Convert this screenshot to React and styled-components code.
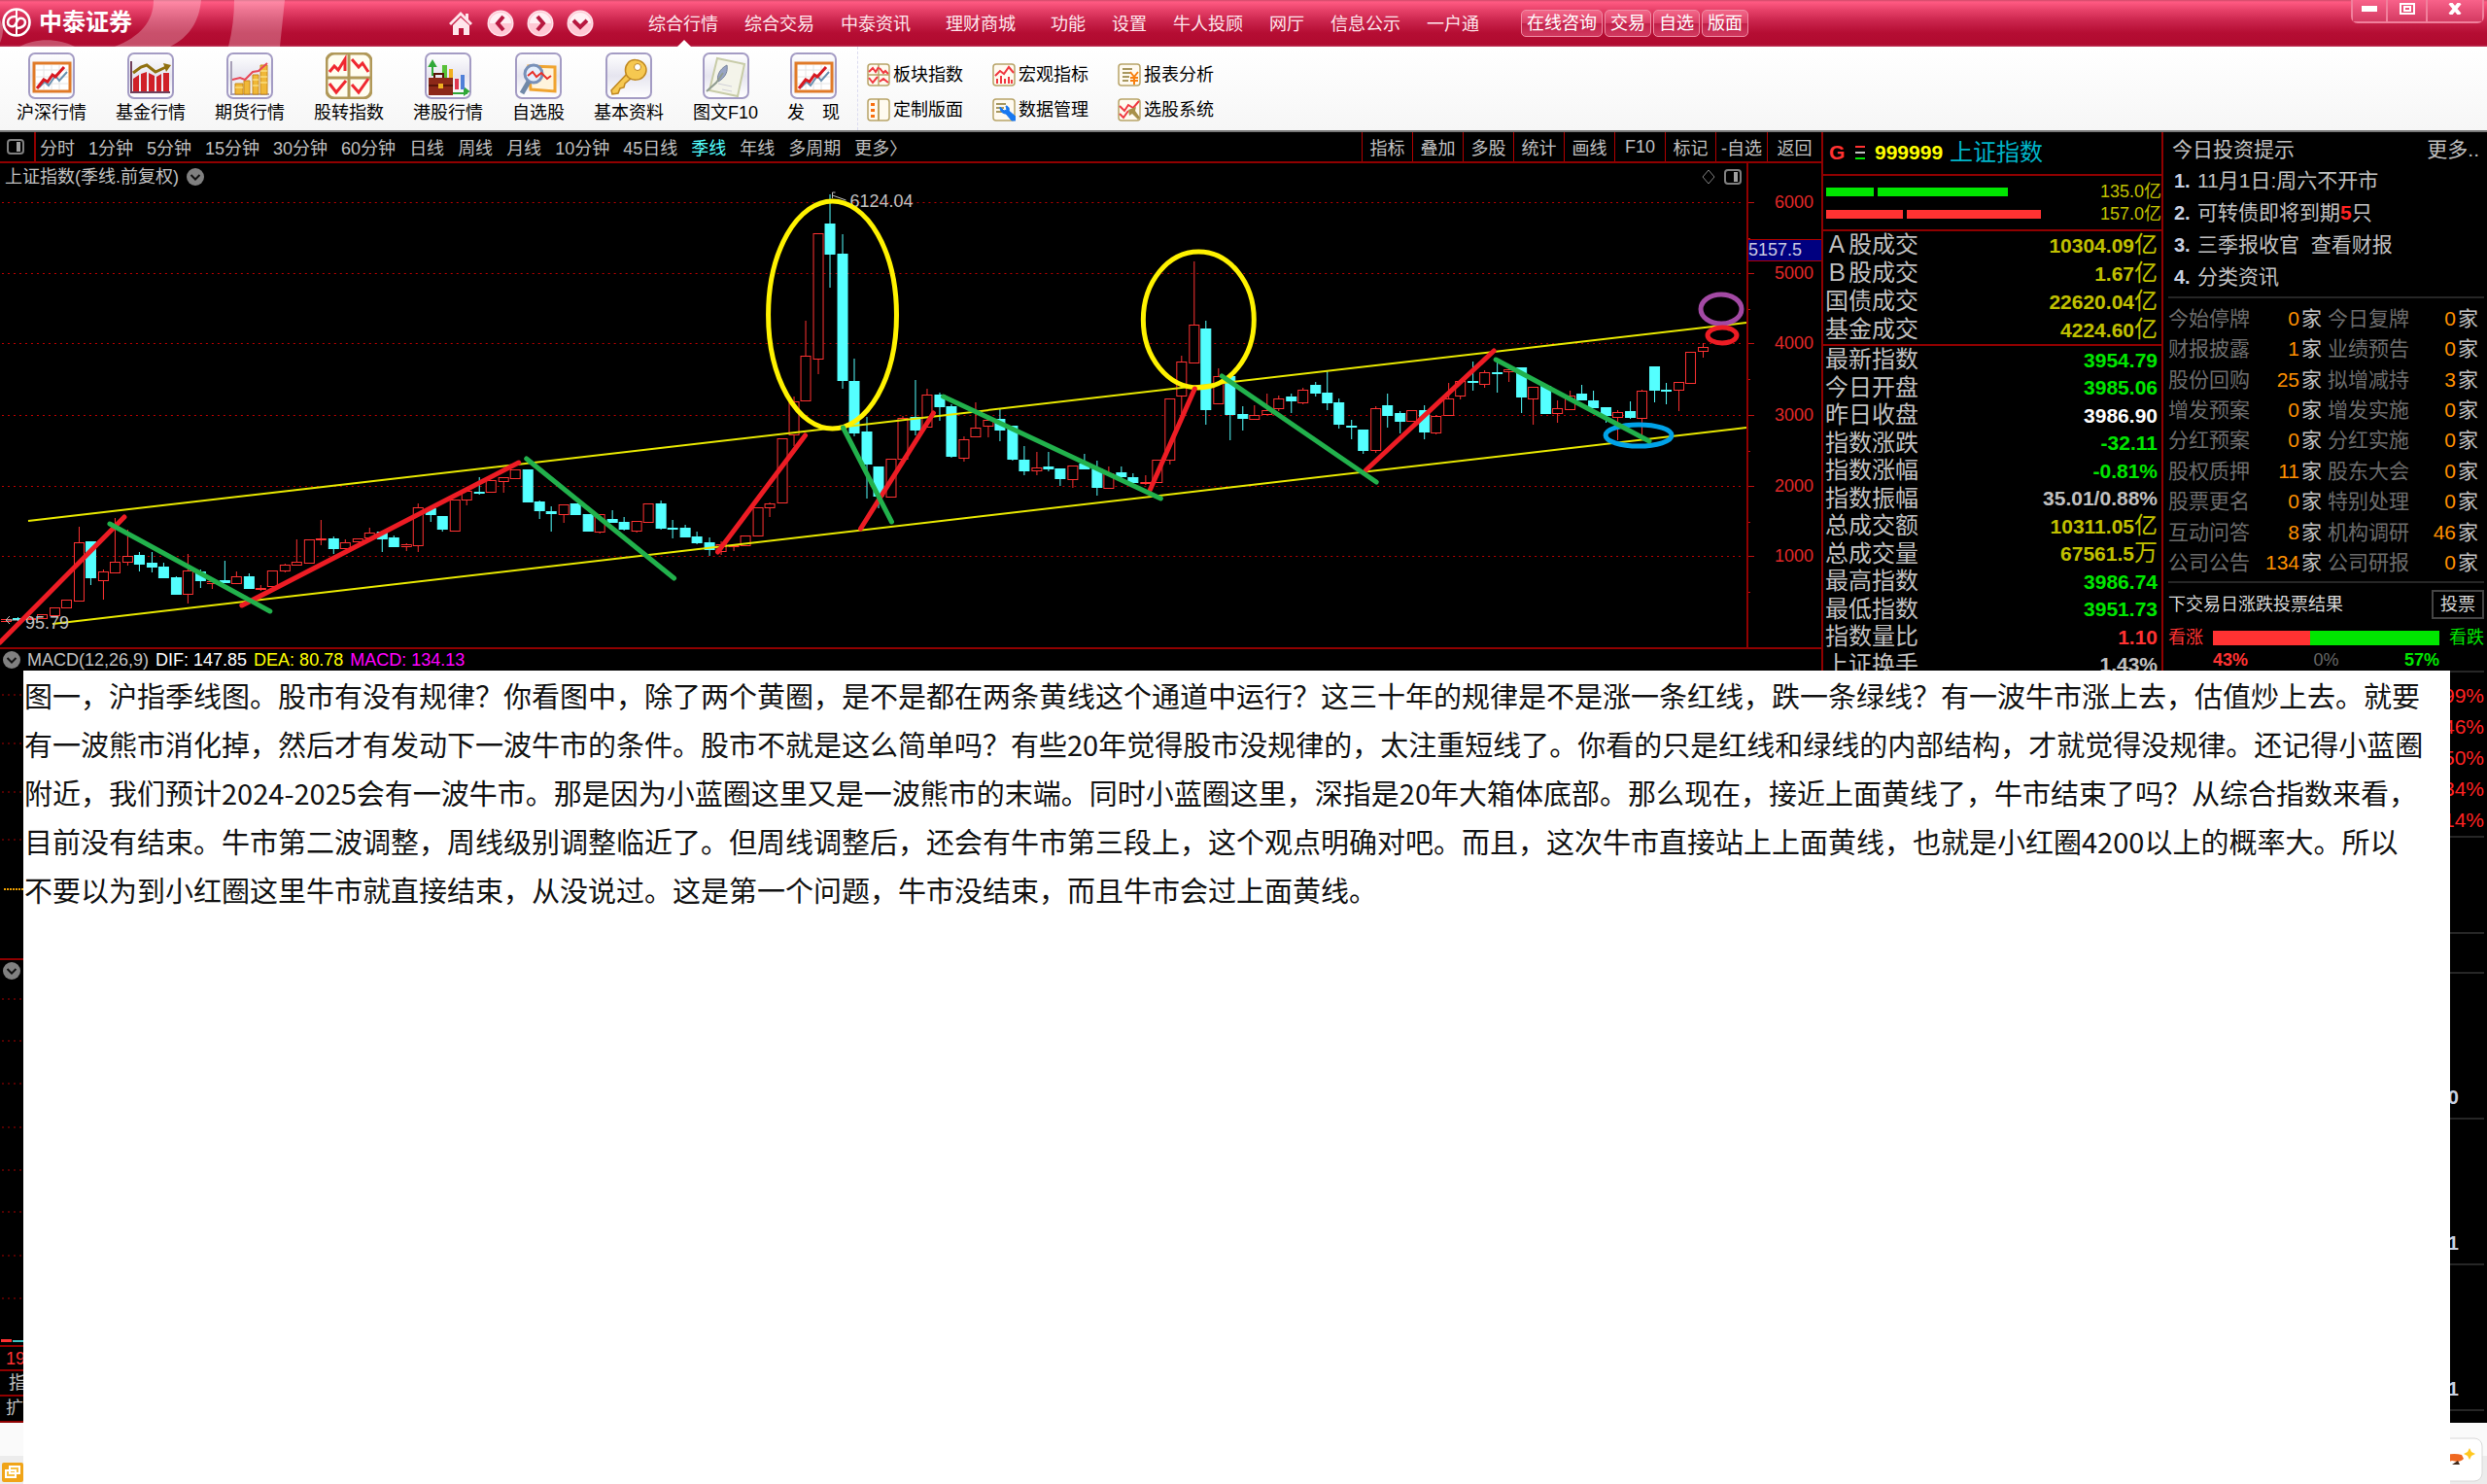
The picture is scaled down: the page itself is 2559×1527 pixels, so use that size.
import React from "react";
import styled, { createGlobalStyle, css } from "styled-components";

const GlobalStyle = createGlobalStyle`
  * {
    box-sizing: border-box;
  }

  body {
    margin: 0;
    background: #000;
    font-family: "Liberation Sans", "Noto Sans CJK SC", sans-serif;
    font-size: 18px;
    line-height: 24px;
    color: #c0c0c0;
  }

  button {
    font-family: inherit;
    cursor: pointer;
  }

  svg {
    display: block;
    flex: none;
  }
`;

const Window = styled.div`
  position: relative;
  display: flex;
  flex-direction: column;
  min-height: 100vh;
  overflow: hidden;
`;

/* ---------- title bar ---------- */

const TitleBar = styled.header`
  position: relative;
  display: flex;
  height: 48px;
  background: linear-gradient(#cf4a69 0, #ff5a82 2px, #e8426a 10px, #c9234b 22px, #b50d33 34px, #b00a2f 46px, #c04060);
`;

const TitleArt = styled.svg`
  position: absolute;
  left: 0;
  top: 0;
`;

const Brand = styled.div`
  position: relative;
  display: flex;
  align-items: center;
  gap: 8px;
  width: 460px;
  padding: 0 0 2px 2px;
  color: #fff;
  font-size: 24px;
  font-weight: bold;
`;

const RoundButtons = styled.div`
  position: relative;
  display: flex;
  align-items: center;
  gap: 13px;
  width: 194px;
`;

const IconButton = styled.button`
  padding: 0;
  border: none;
  background: none;
`;

const Nav = styled.nav`
  position: relative;
  display: flex;
  align-items: center;
`;

const NavLink = styled.a`
  position: relative;
  padding: 13px 14px 11px 13px;
  margin: 0 ${(p) => (p.$wide ? 9 : 0)}px;
  color: #ffe6ec;
  text-decoration: none;

  ${(p) =>
    p.$active &&
    css`
      &::after {
        content: "";
        position: absolute;
        left: 50%;
        bottom: 0;
        margin-left: -7px;
        border: 7px solid transparent;
        border-top: none;
        border-bottom-color: #fff;
      }
    `}
`;

const QuickButtons = styled.div`
  display: flex;
  align-items: center;
  gap: 2px;
  padding-left: 29px;
`;

const QuickButton = styled.button`
  height: 28px;
  padding: 0 5px;
  border: 1px solid #f08ca4;
  border-radius: 5px;
  background: linear-gradient(#f4688a, #d83a62 50%, #c01f48 50%, #d23a60);
  color: #fff;
  font-size: 18px;
  line-height: 24px;
`;

const WindowControls = styled.div`
  display: flex;
  height: 24px;
  margin: 0 3px 0 auto;
  border: 2px solid #f0809c;
  border-top: none;
  border-radius: 0 0 7px 7px;
`;

const ControlButton = styled.button`
  display: flex;
  align-items: center;
  justify-content: center;
  width: ${(p) => p.$width}px;
  padding: 0 0 4px;
  border: none;
  border-right: ${(p) => (p.$last ? "none" : "2px solid #f0809c")};
  background: linear-gradient(#f8628a, #d43a62);
`;

/* ---------- icon tool bar ---------- */

const ToolBar = styled.div`
  display: flex;
  height: 88px;
  border-bottom: 2px solid #777;
  background: linear-gradient(#fff, #fafafa 60%, #f6f6f6);
  color: #000;
`;

const BigTools = styled.div`
  display: flex;
  align-items: flex-start;
  gap: 30px;
  padding: 6px 18px 0 17px;
  border-right: 1px dashed #dcdcf0;
`;

const BigTool = styled.button`
  display: flex;
  flex-direction: column;
  align-items: center;
  padding: 0;
  border: none;
  background: none;
  color: #000;
  font-size: 18px;
  line-height: 28px;
  white-space: pre;
`;

const SmallTools = styled.div`
  display: grid;
  grid-template-columns: repeat(3, 100px);
  grid-template-rows: 24px 24px;
  gap: 12px 29px;
  padding: 17px 0 0 9px;
`;

const SmallTool = styled.button`
  display: flex;
  align-items: center;
  gap: 3px;
  padding: 0;
  border: none;
  background: none;
  color: #000;
  font-size: 18px;
  line-height: 24px;
`;

/* ---------- workspace ---------- */

const Workspace = styled.main`
  display: flex;
  flex: 1;
  background: #000;
`;

const ChartColumn = styled.section`
  display: flex;
  flex: 1;
  flex-direction: column;
  min-width: 0;
  border-right: 2px solid #900000;
`;

const PeriodBar = styled.div`
  display: flex;
  height: 32px;
  border-bottom: 2px solid #900000;
`;

const PanelToggle = styled.button`
  width: 37px;
  padding: 0 0 0 7px;
  border: none;
  border-right: 2px solid #900000;
  background: none;
`;

const Periods = styled.div`
  display: flex;
  flex: 1;
  align-items: center;
  gap: 14px;
  padding-left: 4px;
`;

const Period = styled.button`
  padding: 0;
  border: none;
  background: none;
  color: ${(p) => (p.$active ? "#54ffff" : "#c0c0c0")};
  font-size: 18px;
  white-space: nowrap;
`;

const ChartTool = styled.button`
  width: ${(p) => p.$width || 52}px;
  padding: 0;
  border: none;
  border-left: 1px solid #b00000;
  background: none;
  color: #c0c0c0;
  font-size: 18px;
`;

const ChartRow = styled.div`
  display: flex;
  border-bottom: 2px solid #900000;
`;

const ChartArea = styled.div`
  flex: 1;
  min-width: 0;
`;

const ChartTitle = styled.div`
  display: flex;
  align-items: center;
  gap: 8px;
  height: 28px;
  padding: 0 5px;

  span {
    flex: 1;
  }
`;

const ChartName = styled.h1`
  margin: 0;
  font-size: 18px;
  font-weight: normal;
`;

const Axis = styled.svg`
  border-left: 2px solid #900000;
`;

const IndicatorTitle = styled.div`
  display: flex;
  align-items: center;
  gap: 7px;
  height: 24px;
  padding: 0 0 2px 3px;
  white-space: pre;
`;

const Indicator = styled.span`
  color: ${(p) => p.$color};
`;

const SubPanel = styled.div`
  height: ${(p) => p.$height}px;
  border-bottom: 2px solid #900000;
`;

const StripRow = styled.div`
  height: ${(p) => p.$height}px;
  padding-left: ${(p) => p.$pad}px;
  border-bottom: 2px solid #900000;
  color: ${(p) => p.$color || "#c0c0c0"};
`;

/* ---------- quote panel ---------- */

const QuotePanel = styled.section`
  width: 350px;
  border-right: 2px solid #900000;
`;

const QuoteHead = styled.div`
  display: flex;
  align-items: center;
  height: 45px;
  padding: 0 0 1px 6px;
  border-bottom: 2px solid #900000;
  font-size: 21px;
  font-weight: bold;
`;

const Flag = styled.span`
  width: 26px;
  color: #ff3232;
`;

const Code = styled.span`
  padding: 0 7px 0 9px;
  color: #ff0;
`;

const IndexName = styled.span`
  color: #00b4c8;
  font-size: 24px;
  font-weight: normal;
`;

const FlowBox = styled.div`
  display: flex;
  flex-direction: column;
  justify-content: center;
  height: 57px;
  padding-left: 3px;
  border-bottom: 2px solid #900000;
  color: #c0c000;
`;

const FlowRow = styled.div`
  display: flex;
  align-items: center;
  gap: 4px;
  height: 23px;
`;

const FlowBar = styled.span`
  width: ${(p) => p.$width}px;
  height: 9px;
  background: ${(p) => p.$color};
`;

const FlowValue = styled.span`
  margin-left: auto;
`;

const QuoteTable = styled.table`
  width: 100%;
  height: ${(p) => p.$height}px;
  border-collapse: collapse;
  border-bottom: 2px solid #900000;
  font-size: 24px;
  line-height: 24px;

  th {
    padding: 0 0 0 2px;
    font-weight: normal;
    text-align: left;
  }

  td {
    padding: 0 4px 0 0;
    text-align: right;
  }
`;

const Value = styled.td`
  color: ${(p) => p.$color};

  b {
    font-size: 21px;
  }
`;

/* ---------- news panel ---------- */

const NewsPanel = styled.aside`
  width: 333px;
  padding: 0 3px 0 5px;
  font-size: 21px;
`;

const NewsHead = styled.div`
  display: flex;
  justify-content: space-between;
  padding: 6px 5px 3px 4px;

  a {
    color: inherit;
    text-decoration: none;
  }
`;

const NewsList = styled.ol`
  height: 138px;
  margin: 0;
  padding: 0 0 0 6px;
  border-bottom: 2px solid #262626;
  list-style: none;

  li {
    display: flex;
    height: 33px;
    align-items: center;
    white-space: pre;
  }

  b {
    width: 24px;
    color: #c8d0e0;
    font-size: 20px;
  }

  em {
    color: #f22;
    font-style: normal;
    font-weight: bold;
  }
`;

const EventTable = styled.table`
  width: 100%;
  height: 293px;
  padding: 5px 0 3px;
  border-bottom: 2px solid #262626;
  border-spacing: 0;
  line-height: 24px;
  table-layout: fixed;

  th {
    width: 84px;
    padding: 0;
    color: #6c6c6c;
    font-weight: normal;
    text-align: left;
  }

  td {
    padding: 0 6px 0 0;
    text-align: right;
  }

  td:nth-child(2) {
    width: 80px;
  }

  b {
    padding-right: 2px;
    color: #ff9000;
    font-weight: normal;
  }
`;

const VoteHead = styled.div`
  display: flex;
  align-items: center;
  justify-content: space-between;
  height: 44px;
  font-size: 18px;
  color: #d8d8d8;
`;

const VoteButton = styled.button`
  height: 30px;
  padding: 0 7px;
  border: 2px solid #444;
  background: #000;
  color: #d8d8d8;
  font-size: 18px;
  line-height: 24px;
`;

const VoteRow = styled.div`
  display: grid;
  grid-template-columns: 36px 1fr 36px;
  column-gap: 10px;
  align-items: center;
  height: 23px;
  font-size: 18px;
`;

const Side = styled.span`
  color: ${(p) => p.$color};
`;

const VoteBar = styled.div`
  display: flex;
  height: 15px;
  background: #00e600;

  i {
    background: #ff3232;
  }
`;

const VoteShares = styled.div`
  display: flex;
  grid-column: 2;
  justify-content: space-between;
  font-weight: bold;

  span:nth-child(2) {
    color: #666;
    font-weight: normal;
  }
`;

const RankList = styled.ul`
  height: ${(p) => p.$height}px;
  margin: 0;
  padding: 8px 0 0;
  border-top: 2px solid #262626;
  list-style: none;
  color: #f22;
  text-align: right;

  li {
    padding: 4px 0;
  }
`;

const Gap = styled.div`
  height: ${(p) => p.$height}px;
  border-top: 2px solid #262626;
`;

const Stat = styled.div`
  display: flex;
  align-items: flex-end;
  justify-content: flex-end;
  height: 150px;
  padding: 0 26px 9px 0;
  border-top: 2px solid #262626;
  color: #c8d0e0;
  font-size: 20px;
  font-weight: bold;
`;

const StatusBar = styled.footer`
  display: flex;
  align-items: flex-end;
  justify-content: space-between;
  height: 64px;
  padding: 0 4px 3px 2px;
  background: linear-gradient(#fafafa 34px, #ececec 34px);
`;

/* ---------- note lying over the lower half ---------- */

const Note = styled.article`
  position: absolute;
  top: 690px;
  right: 38px;
  bottom: 0;
  left: 24px;
  overflow: hidden;
  background: #fff;
  color: #111;
  font-family: "Noto Sans CJK SC", sans-serif;
  font-size: 29px;
  line-height: 50px;
  white-space: nowrap;

  p {
    margin: 0;
    padding-left: 1px;
  }
`;

const RED = "#ff3232";
const CYAN = "#54ffff";
const GREEN = "#00e600";
const YELLOW = "#c0c000";

/* Candles: [up, high, top of body, bottom of body, low],
   in thirds of a pixel below the base of their run. */
const RUNS = [
  {
    base: 400,
    candles: [
      [1, 711, 712, 716, 717], [0, 706, 709, 712, 716], [1, 706, 707, 710, 711], [1, 697, 697, 707, 707],
      [1, 674, 674, 699, 699], [1, 652, 652, 676, 676], [1, 425, 475, 653, 653], [0, 470, 470, 582, 605],
      [1, 557, 565, 590, 650], [1, 400, 535, 568, 568], [1, 436, 517, 535, 545], [0, 505, 514, 541, 564],
      [0, 505, 538, 550, 568], [0, 537, 550, 583, 583], [0, 578, 583, 632, 632], [1, 511, 562, 634, 662],
      [0, 558, 565, 590, 614], [1, 590, 593, 599, 617], [0, 532, 592, 596, 601], [1, 564, 580, 599, 599],
      [0, 570, 578, 614, 614], [1, 605, 614, 618, 623], [1, 562, 562, 610, 610], [1, 541, 544, 562, 566],
      [1, 466, 535, 543, 543], [1, 466, 466, 536, 541], [1, 406, 461, 464, 483], [0, 457, 461, 493, 510],
      [1, 466, 475, 493, 493], [1, 463, 463, 472, 472], [1, 430, 445, 458, 458], [0, 437, 441, 461, 505],
      [0, 453, 460, 486, 486], [1, 478, 481, 486, 500], [1, 353, 367, 483, 503], [0, 364, 369, 388, 411],
      [0, 394, 394, 433, 442], [1, 341, 341, 437, 437], [1, 314, 314, 343, 361], [0, 272, 317, 321, 326],
      [1, 283, 283, 319, 319], [1, 272, 274, 284, 320], [1, 250, 250, 275, 280], [0, 250, 250, 348, 352],
      [0, 344, 348, 375, 402], [0, 363, 377, 384, 442], [1, 358, 358, 388, 415], [0, 353, 353, 388, 388],
      [0, 388, 388, 438, 438], [1, 388, 388, 442, 446], [0, 375, 403, 410, 410], [0, 397, 411, 433, 438],
      [1, 409, 409, 438, 445], [1, 355, 355, 410, 410], [0, 344, 353, 430, 434], [0, 406, 430, 433, 461],
    ],
  },
  {
    base: 180,
    candles: [
      [0, 1080, 1090, 1115, 1115], [0, 1102, 1117, 1133, 1139], [0, 1120, 1135, 1155, 1175], [1, 1130, 1140, 1160, 1172],
      [1, 1140, 1143, 1147, 1160], [1, 1114, 1114, 1142, 1142], [1, 1027, 1027, 1114, 1114], [1, 1010, 1015, 1027, 1057],
      [1, 812, 812, 1011, 1011], [1, 685, 700, 800, 838], [1, 450, 559, 695, 695], [1, 181, 181, 566, 616],
      [0, 60, 149, 243, 347], [0, 184, 244, 634, 661], [0, 568, 635, 796, 806], [0, 748, 793, 890, 1000],
      [0, 901, 901, 990, 1030], [1, 875, 875, 993, 993], [1, 743, 749, 875, 875], [0, 634, 748, 787, 805],
      [1, 661, 677, 777, 777], [0, 671, 677, 715, 760], [0, 707, 713, 868, 873], [1, 807, 817, 872, 886],
      [1, 702, 781, 808, 808], [1, 755, 755, 775, 810], [0, 722, 753, 787, 823], [0, 775, 775, 877, 882],
      [0, 838, 878, 913, 926], [1, 855, 902, 911, 927], [0, 856, 901, 907, 914], [0, 907, 907, 935, 960],
      [1, 898, 898, 940, 967], [0, 860, 890, 905, 905], [0, 882, 905, 962, 991], [1, 900, 920, 967, 967],
      [0, 900, 918, 930, 938], [0, 920, 933, 948, 948], [1, 927, 947, 952, 958], [1, 880, 880, 948, 948],
      [1, 691, 691, 880, 895], [1, 559, 577, 682, 740], [1, 266, 461, 578, 578], [0, 450, 473, 724, 770],
      [1, 596, 622, 704, 704], [0, 622, 622, 738, 820], [0, 715, 738, 750, 788], [1, 712, 740, 754, 754],
    ],
  },
  {
    base: 250,
    candles: [
      [1, 466, 515, 527, 527], [1, 471, 481, 509, 520], [0, 465, 475, 487, 524], [1, 448, 454, 491, 497],
      [0, 430, 439, 461, 473], [0, 395, 461, 492, 515], [0, 479, 493, 559, 573], [0, 546, 565, 568, 605],
      [0, 577, 577, 640, 650], [1, 505, 511, 640, 648], [0, 466, 502, 532, 570], [0, 520, 525, 550, 587],
      [1, 517, 517, 548, 548], [0, 502, 515, 582, 605], [1, 530, 535, 584, 591], [1, 433, 481, 530, 530],
      [1, 425, 425, 472, 482], [0, 366, 426, 429, 456], [1, 394, 400, 434, 446], [0, 370, 399, 402, 461],
      [1, 388, 391, 396, 430], [0, 385, 385, 474, 524], [1, 445, 445, 481, 560], [0, 440, 440, 524, 524],
      [1, 485, 511, 526, 555], [1, 457, 470, 513, 513], [0, 437, 466, 482, 482], [0, 456, 485, 506, 506],
      [0, 507, 507, 530, 555], [1, 515, 521, 536, 608], [0, 488, 520, 537, 542], [1, 452, 457, 539, 605],
      [0, 380, 380, 452, 492], [0, 433, 452, 455, 497], [1, 430, 430, 454, 520], [1, 337, 337, 433, 433],
      [1, 308, 320, 332, 353],
    ],
  },
];

const CANDLES = RUNS.flatMap(({ base, candles }) =>
  candles.map(([up, ...ys]) => [up, ...ys.map((y) => Math.round(base + y / 3))])
);

const GRID = [
  [6000, 208],
  [5000, 281],
  [4000, 353],
  [3000, 427],
  [2000, 500],
  [1000, 572],
];

const RALLIES = [
  [0, 661, 128, 532], [249, 623, 534, 476], [739, 568, 829, 448],
  [886, 544, 961, 425], [1184, 504, 1230, 400], [1406, 484, 1538, 361],
];

const DECLINES = [
  [113, 539, 278, 629], [542, 472, 694, 595], [868, 440, 918, 537],
  [971, 408, 1195, 513], [1258, 387, 1417, 496], [1540, 370, 1698, 454],
];

const CIRCLES = [
  ["#fff200", 857, 324, 66, 117],
  ["#fff200", 1234, 329, 57, 70],
  ["#a349a4", 1772, 318, 21, 15],
  ["#ed1c24", 1773, 345, 15, 8],
  ["#00a2e8", 1687, 448, 34, 11],
];

const Candle = ({ index, data: [up, high, top, bottom, low] }) => {
  const x = Math.round(6 + index * 12.477);
  const height = Math.max(bottom - top, 1);
  const color = up ? RED : CYAN;
  return (
    <g stroke={color} fill={up ? "#000" : color}>
      {high < top && <path d={`M${x + 0.5} ${high}V${top}`} />}
      {low > bottom && <path d={`M${x + 0.5} ${bottom}V${low}`} />}
      <rect x={x - 4.5} y={top + 0.5} width="10" height={height} />
    </g>
  );
};

const Strokes = ({ color, lines }) => (
  <g stroke={color} strokeWidth="5" strokeLinecap="round">
    {lines.map(([x1, y1, x2, y2]) => (
      <line key={x1} x1={x1} y1={y1} x2={x2} y2={y2} />
    ))}
  </g>
);

const PriceChart = () => (
  <svg width="100%" height="470" viewBox="0 196 1798 470" preserveAspectRatio="none">
    {GRID.map(([price, y]) => (
      <path key={price} d={`M2 ${y + 0.5}H1794`} stroke="#c00000" strokeWidth="1" strokeDasharray="2 4" />
    ))}
    {CANDLES.map((data, i) => (
      <Candle key={i} index={i} data={data} />
    ))}
    <g fill="none" stroke="#e8e800">
      <path d="M29 536L1798 332" strokeWidth="2" />
      <path d="M54 642L1798 440" strokeWidth="2" />
    </g>
    <g fill="none" stroke="#c0c0c0">
      <path d="M857 198h3M857 198v6M857 201l14 5" />
      <path d="M6 638h12M6 638l4-4M6 638l4 4" />
    </g>
    <g fill="#c0c0c0" fontSize="18">
      <text x="875" y="213">6124.04</text>
      <text x="26" y="647">95.79</text>
    </g>
    <g fill="none" strokeWidth="5">
      {CIRCLES.map(([color, cx, cy, rx, ry]) => (
        <ellipse key={cx + cy} cx={cx} cy={cy} rx={rx} ry={ry} stroke={color} />
      ))}
    </g>
    <Strokes color="#ed1c24" lines={RALLIES} />
    <Strokes color="#22b14c" lines={DECLINES} />
  </svg>
);

const PriceAxis = () => (
  <Axis width="77" height="498" viewBox="2 168 75 498" preserveAspectRatio="none">
    <rect x="1" y="246" width="76" height="22" fill="#000080" />
    <path d="M0 246.5H77M0 268.5H77" stroke="#b00000" />
    <text x="2" y="263" fontSize="18" fill="#c8c8e0">5157.5</text>
    {GRID.map(([price, y]) => (
      <g key={price}>
        <path d={`M0 ${y + 0.5}H8M0 ${y + 37.5}H4`} stroke="#c01010" />
        <text x="69" y={y + 6} fontSize="18" fill="#e02828" textAnchor="end">{price}</text>
      </g>
    ))}
  </Axis>
);

const DottedLines = ({ height, lines }) => (
  <svg width="100%" height={height}>
    {lines.map((y) => (
      <line key={y} x1="2" x2="100%" y1={y} y2={y} stroke="#a80000" strokeDasharray="2 4" />
    ))}
  </svg>
);

/* ---------- icons ---------- */

const Emblem = () => (
  <svg width="30" height="32" viewBox="0 0 30 32" fill="none" stroke="#fff" strokeWidth="2.6">
    <circle cx="15" cy="16" r="13.5" />
    <path d="M15 3v26" strokeWidth="2" />
    <path d="M14 10c-6 0-8 3-8 6s3 5 6 4 3-7 6-8 6 1 6 4-3 6-9 6" />
  </svg>
);

const HomeIcon = () => (
  <svg width="28" height="28" viewBox="0 0 28 28" fill="#ffe6ec">
    <path d="M14 2L2 14l2 2L14 6l10 10 2-2-4-4V4h-3v3z" />
    <path d="M14 8l-8 8v10h6v-7h5v7h6V16z" />
  </svg>
);

const RoundIcon = ({ d }) => (
  <svg width="28" height="28" viewBox="0 0 28 28">
    <circle cx="14" cy="14" r="13.5" fill="#ffe0e8" />
    <circle cx="14" cy="14" r="12" fill="#ffc8d4" />
    <path d="M3 14a11 11 0 0 1 22 0z" fill="#fff0f4" />
    <path d={d} fill="none" stroke="#b81840" strokeWidth="4" />
  </svg>
);

const ChevronIcon = () => (
  <svg width="18" height="18" viewBox="0 0 18 18">
    <circle cx="9" cy="9" r="9" fill="#808080" />
    <path d="M4.500 7L9 11.500L13.500 7" fill="none" stroke="#111" strokeWidth="2" />
  </svg>
);

const DockIcon = () => (
  <svg width="18" height="16" viewBox="0 0 18 16" fill="none" stroke="#808080" strokeWidth="2">
    <rect x="1" y="1" width="16" height="14" rx="3" />
    <rect x="10" y="3" width="4" height="10" fill="#a0a0a0" stroke="none" />
  </svg>
);

const Framed = ({ children }) => (
  <svg width="48" height="48" viewBox="0 0 48 48" fill="none">
    <defs>
      <linearGradient id="frame" x2="0" y2="1">
        <stop offset="0" stopColor="#fff" />
        <stop offset="0.5" stopColor="#e6e5ef" />
        <stop offset="1" stopColor="#fff" />
      </linearGradient>
    </defs>
    <rect x="1" y="1" width="46" height="46" rx="6" fill="url(#frame)" stroke="#a49cc4" strokeWidth="2" />
    {children}
  </svg>
);

const BoardIcon = () => (
  <Framed>
    <rect x="6" y="11" width="37" height="29" fill="#fff" stroke="#e07a28" strokeWidth="3" />
    <path d="M8 18h33M8 25h33M8 32h33M16 13v25M24 13v25M32 13v25" stroke="#e4e4e4" />
    <path d="M11 36l6-6 4 4 7-10 4 5 8-9" stroke="#6890b0" strokeWidth="2" />
    <path d="M9 37l7-9 4 2 5-7 3 2 9-10" stroke="#d81820" strokeWidth="3" />
  </Framed>
);

const FundIcon = () => (
  <Framed>
    <path d="M4 9v32h40" stroke="#70405c" strokeWidth="2" />
    <path d="M6 40V27l6-4v17zM14 40V22l6-2v20zM22 40V21l6 3v16zM30 40V25l5-3v18zM37 40V21h6v19z" fill="#d02028" />
    <path d="M6 21l8-6 6-2 9 7 13-6" stroke="#907010" strokeWidth="3" />
    <path d="M37 11l8 2-5 7z" fill="#907010" />
  </Framed>
);

const FutureIcon = () => (
  <Framed>
    <path d="M5 9v34h39" stroke="#a8a0b8" strokeWidth="2" />
    <path d="M9 43V32h8v11zM18 43V29h6v14zM27 43V23h6v20zM35 43V13h7v30z" fill="#f0b838" stroke="#c88818" />
    <path d="M9 36h8M27 28h6M27 34h6M35 19h7M35 25h7M35 31h7" stroke="#fff0a0" />
    <path d="M6 28l8-2 5 2 8-8 6-1 9-8" stroke="#e84858" strokeWidth="2" />
  </Framed>
);

const QuadIcon = () => (
  <svg width="48" height="48" viewBox="0 0 48 48" fill="none">
    <rect x="1" y="1" width="46" height="46" rx="8" fill="#fffdf0" stroke="#b09858" strokeWidth="3" />
    <path d="M24 2v44M2 26h44" stroke="#b09858" strokeWidth="3" />
    <path d="M4 20l5-6 4 4 7-11v12M27 7l7 8 4-4 6 9M4 32l7 9 10-12M27 33l7 8 10-14" stroke="#f02830" strokeWidth="3" />
  </svg>
);

const HongKongIcon = () => (
  <Framed>
    <path d="M8 24V11M8 9l-3 5h6zM24 42h20M45 40l-4-3v6z" stroke="#30a838" strokeWidth="2" fill="#30a838" />
    <path d="M18 26V13h5v13z" fill="#58c038" />
    <path d="M25 30V17h4v13z" fill="#f0b020" />
    <path d="M31 38V27h4v11z" fill="#e03850" />
    <path d="M37 38V23h4v15z" fill="#5080d8" />
    <rect x="4" y="26" width="25" height="18" fill="#8c2818" />
    <path d="M10 26v-4h9v4M4 34h25" stroke="#581408" strokeWidth="2" />
    <rect x="14" y="32" width="5" height="5" fill="#f0b020" />
  </Framed>
);

const WatchIcon = () => (
  <Framed>
    <path d="M14 14l27 1v25l-25-2z" fill="#fff4dc" stroke="#f0a430" strokeWidth="3" />
    <circle cx="19" cy="22" r="9" fill="#e4eefc" stroke="#7890b8" strokeWidth="3" />
    <path d="M13 24l5-4 4 5 5-4 6 6 4-3" stroke="#e83028" strokeWidth="2" />
    <path d="M14 30L7 42" stroke="#7088a8" strokeWidth="5" />
  </Framed>
);

const KeyIcon = () => (
  <Framed>
    <g stroke="#c08820" strokeWidth="1.500" fill="#f6c850">
      <path d="M22 22L6 39l1 4 6-1 2-5 4-1 1-4 7-6z" />
      <path d="M23 11c4-5 12-4 16 0s4 10 0 14-11 4-15 1-5-10-1-15z" />
    </g>
    <circle cx="33" cy="15" r="3.500" fill="#fff" stroke="#c08820" />
  </Framed>
);

const QuillIcon = () => (
  <Framed>
    <path d="M15 6l28 6-7 33-29-6z" fill="#f4f4ea" stroke="#c8cca8" strokeWidth="2" />
    <path d="M16 32l14 3M20 38l10 2" stroke="#d0d0d8" />
    <path d="M25 13c-8 4-11 12-9 17l3-2c5-4 7-9 6-15z" fill="#98a4c4" stroke="#78849c" />
    <path d="M4 40l10-9 7-10" stroke="#909c90" strokeWidth="2" />
  </Framed>
);

const SmallIcon = ({ children }) => (
  <svg width="24" height="24" viewBox="0 0 24 24" fill="none">
    <rect x="1" y="1" width="22" height="22" rx="3" fill="#fffaf0" stroke="#b8a468" strokeWidth="1.500" />
    {children}
  </svg>
);

const SMALL_ICONS = {
  quad: (
    <SmallIcon>
      <path d="M12 1v22M1 12h22" stroke="#b8a468" strokeWidth="1.500" />
      <path d="M2 9l4-4 3 4 3-5M13 5l4 5 2-2 3 3M2 15l4 5 5-6M13 19l4-3 5 4" stroke="#f03840" strokeWidth="2" />
    </SmallIcon>
  ),
  macro: (
    <SmallIcon>
      <path d="M3 13l5-5 4 3 5-7 5 6" stroke="#f03840" strokeWidth="2" />
      <path d="M5 21v-5M9 21v-8M13 21v-5M17 21v-7M20 21v-4" stroke="#f03840" strokeWidth="2" />
    </SmallIcon>
  ),
  report: (
    <SmallIcon>
      <path d="M5 6h10M5 10h8M5 14h7M5 18h6" stroke="#a89860" strokeWidth="2" />
      <path d="M13 9l4 5 4-5M17 14v8M13 15h8M13 18h8" stroke="#f88010" strokeWidth="2" />
    </SmallIcon>
  ),
  layout: (
    <SmallIcon>
      <path d="M12 1v22" stroke="#b8a468" strokeWidth="2" />
      <path d="M6 5v3M6 11v3M6 17v3" stroke="#f87010" strokeWidth="4" />
    </SmallIcon>
  ),
  data: (
    <SmallIcon>
      <path d="M4 6h10M4 10h8M4 14h6" stroke="#a89860" strokeWidth="2" />
      <path d="M8 9c0 5 3 7 6 7l6 7h4v-4l-7-6c1-3-1-5-3-5l1 4-3 1z" fill="#1878f0" stroke="#1878f0" />
    </SmallIcon>
  ),
  pick: (
    <SmallIcon>
      <path d="M2 8l5 5 4-6 5 3 6-7M2 16l4 4 5-7" stroke="#f03840" strokeWidth="2" />
      <path d="M11 12l8-3-1 4 5 7-2 2-6-6-3 2z" fill="#a89048" />
    </SmallIcon>
  ),
};

const NAV = ["综合行情", "综合交易", "中泰资讯", "理财商城", "功能", "设置", "牛人投顾", "网厅", "信息公示", "一户通"];

const BIG_TOOLS = [
  ["沪深行情", BoardIcon],
  ["基金行情", FundIcon],
  ["期货行情", FutureIcon],
  ["股转指数", QuadIcon],
  ["港股行情", HongKongIcon],
  ["自选股", WatchIcon],
  ["基本资料", KeyIcon],
  ["图文F10", QuillIcon],
  ["发　现", BoardIcon],
];

const SMALL_TOOLS = [
  ["板块指数", "quad"],
  ["宏观指标", "macro"],
  ["报表分析", "report"],
  ["定制版面", "layout"],
  ["数据管理", "data"],
  ["选股系统", "pick"],
];

const PERIODS = [
  "分时", "1分钟", "5分钟", "15分钟", "30分钟", "60分钟", "日线", "周线",
  "月线", "10分钟", "45日线", "季线", "年线", "多周期", "更多",
];

const TURNOVER = [
  ["Ａ股成交", "10304.09", "亿", YELLOW],
  ["Ｂ股成交", "1.67", "亿", YELLOW],
  ["国债成交", "22620.04", "亿", YELLOW],
  ["基金成交", "4224.60", "亿", YELLOW],
];

const QUOTES = [
  ["最新指数", "3954.79", "", GREEN],
  ["今日开盘", "3985.06", "", GREEN],
  ["昨日收盘", "3986.90", "", "#fff"],
  ["指数涨跌", "-32.11", "", GREEN],
  ["指数涨幅", "-0.81%", "", GREEN],
  ["指数振幅", "35.01/0.88%", "", "#c0c0c0"],
  ["总成交额", "10311.05", "亿", YELLOW],
  ["总成交量", "67561.5", "万", YELLOW],
  ["最高指数", "3986.74", "", GREEN],
  ["最低指数", "3951.73", "", GREEN],
  ["指数量比", "1.10", "", RED],
  ["上证换手", "1.43%", "", "#c0c0c0"],
];

const EVENTS = [
  ["今始停牌", 0, "今日复牌", 0],
  ["财报披露", 1, "业绩预告", 0],
  ["股份回购", 25, "拟增减持", 3],
  ["增发预案", 0, "增发实施", 0],
  ["分红预案", 0, "分红实施", 0],
  ["股权质押", 11, "股东大会", 0],
  ["股票更名", 0, "特别处理", 0],
  ["互动问答", 8, "机构调研", 46],
  ["公司公告", 134, "公司研报", 0],
];

const NOTE = [
  "图一，沪指季线图。股市有没有规律？你看图中，除了两个黄圈，是不是都在两条黄线这个通道中运行？这三十年的规律是不是涨一条红线，跌一条绿线？有一波牛市涨上去，估值炒上去。就要",
  "有一波熊市消化掉，然后才有发动下一波牛市的条件。股市不就是这么简单吗？有些20年觉得股市没规律的，太注重短线了。你看的只是红线和绿线的内部结构，才就觉得没规律。还记得小蓝圈",
  "附近，我们预计2024-2025会有一波牛市。那是因为小蓝圈这里又是一波熊市的末端。同时小蓝圈这里，深指是20年大箱体底部。那么现在，接近上面黄线了，牛市结束了吗？从综合指数来看，",
  "目前没有结束。牛市第二波调整，周线级别调整临近了。但周线调整后，还会有牛市第三段上，这个观点明确对吧。而且，这次牛市直接站上上面黄线，也就是小红圈4200以上的概率大。所以",
  "不要以为到小红圈这里牛市就直接结束，从没说过。这是第一个问题，牛市没结束，而且牛市会过上面黄线。",
];

const Quotes = ({ rows, height }) => (
  <QuoteTable $height={height}>
    <tbody>
      {rows.map(([label, value, unit, color]) => (
        <tr key={label}>
          <th scope="row">{label}</th>
          <Value $color={color}>
            <b>{value}</b>
            {unit}
          </Value>
        </tr>
      ))}
    </tbody>
  </QuoteTable>
);

const Header = () => (
  <TitleBar>
    <TitleArt width="300" height="48" viewBox="0 0 300 48" fill="#fff" fillOpacity="0.28">
      <path d="M158 0h49c-2 22-12 38-32 48h-57c26-10 40-26 40-48z" />
      <path d="M241 0h52l-5 48h-53c4-16 6-32 6-48z" />
      <path d="M20 48c16-9 40-9 57 0z" />
      <path d="M0 20c4 8 4 14 0 24z" />
    </TitleArt>
    <Brand>
      <Emblem />
      中泰证券
    </Brand>
    <RoundButtons>
      <IconButton aria-label="home"><HomeIcon /></IconButton>
      <IconButton aria-label="back"><RoundIcon d="M17 7l-6 7 6 7" /></IconButton>
      <IconButton aria-label="forward"><RoundIcon d="M11 7l6 7-6 7" /></IconButton>
      <IconButton aria-label="menu"><RoundIcon d="M7 11l7 7 7-7" /></IconButton>
    </RoundButtons>
    <Nav>
      {NAV.map((name, i) => (
        <NavLink key={name} href="#" $active={i === 0} $wide={i === 3}>
          {name}
        </NavLink>
      ))}
    </Nav>
    <QuickButtons>
      {["在线咨询", "交易", "自选", "版面"].map((name) => (
        <QuickButton key={name}>{name}</QuickButton>
      ))}
    </QuickButtons>
    <WindowControls>
      <ControlButton $width={36} aria-label="minimize">
        <svg width="16" height="6"><rect width="16" height="6" fill="#fff" /></svg>
      </ControlButton>
      <ControlButton $width={41} aria-label="maximize">
        <svg width="16" height="12" fill="none" stroke="#fff">
          <rect x="1" y="1" width="14" height="10" strokeWidth="2" />
          <rect x="5" y="4" width="6" height="4" strokeWidth="2" />
        </svg>
      </ControlButton>
      <ControlButton $width={56} $last aria-label="close">
        <svg width="14" height="12"><path d="M2 0l10 12M12 0L2 12" stroke="#fff" strokeWidth="4" /></svg>
      </ControlButton>
    </WindowControls>
  </TitleBar>
);

const News = () => (
  <NewsPanel>
    <NewsHead>
      <span>今日投资提示</span>
      <a href="#">更多..</a>
    </NewsHead>
    <NewsList>
      <li><b>1.</b>11月1日:周六不开市</li>
      <li><b>2.</b>可转债即将到期<em>5</em>只</li>
      <li><b>3.</b>三季报收官  查看财报</li>
      <li><b>4.</b>分类资讯</li>
    </NewsList>
    <EventTable>
      <tbody>
        {EVENTS.map(([left, a, right, b]) => (
          <tr key={left}>
            <th scope="row">{left}</th>
            <td><b>{a}</b>家</td>
            <th scope="row">{right}</th>
            <td><b>{b}</b>家</td>
          </tr>
        ))}
      </tbody>
    </EventTable>
    <VoteHead>
      下交易日涨跌投票结果
      <VoteButton>投票</VoteButton>
    </VoteHead>
    <VoteRow>
      <Side $color={RED}>看涨</Side>
      <VoteBar><i style={{ width: "43%" }} /></VoteBar>
      <Side $color={GREEN}>看跌</Side>
    </VoteRow>
    <VoteRow>
      <VoteShares>
        <Side $color={RED}>43%</Side>
        <span>0%</span>
        <Side $color={GREEN}>57%</Side>
      </VoteShares>
    </VoteRow>
    <RankList $height={170}>
      {["99%", "46%", "50%", "34%", "14%"].map((share) => (
        <li key={share}>{share}</li>
      ))}
    </RankList>
    <Gap $height={99} />
    <Gap $height={41} />
    <Stat>30</Stat>
    <Stat>31</Stat>
    <Stat>31</Stat>
    <Gap $height={12} />
  </NewsPanel>
);

const App = () => (
  <Window>
    <GlobalStyle />
    <Header />
    <ToolBar>
      <BigTools>
        {BIG_TOOLS.map(([name, Icon]) => (
          <BigTool key={name}>
            <Icon />
            {name}
          </BigTool>
        ))}
      </BigTools>
      <SmallTools>
        {SMALL_TOOLS.map(([name, icon]) => (
          <SmallTool key={name}>
            {SMALL_ICONS[icon]}
            {name}
          </SmallTool>
        ))}
      </SmallTools>
    </ToolBar>

    <Workspace>
      <ChartColumn>
        <PeriodBar>
          <PanelToggle aria-label="side panel"><DockIcon /></PanelToggle>
          <Periods>
            {PERIODS.map((name) => (
              <Period key={name} $active={name === "季线"}>
                {name}
                {name === "更多" && "〉"}
              </Period>
            ))}
          </Periods>
          {["指标", "叠加", "多股", "统计", "画线", "F10", "标记"].map((name) => (
            <ChartTool key={name}>{name}</ChartTool>
          ))}
          <ChartTool $width={53}>-自选</ChartTool>
          <ChartTool $width={56}>返回</ChartTool>
        </PeriodBar>
        <ChartRow>
          <ChartArea>
            <ChartTitle>
              <ChartName>上证指数(季线.前复权)</ChartName>
              <ChevronIcon />
              <span />
              <svg width="16" height="16" fill="none" stroke="#808080"><path d="M8 1l6 7-6 7-6-7z" /></svg>
              <DockIcon />
            </ChartTitle>
            <PriceChart />
          </ChartArea>
          <PriceAxis />
        </ChartRow>
        <IndicatorTitle>
          <ChevronIcon />
          <Indicator $color="#c0c0c0">MACD(12,26,9)</Indicator>
          <Indicator $color="#fff">DIF: 147.85</Indicator>
          <Indicator $color="#ff0">DEA: 80.78</Indicator>
          <Indicator $color="#f0f">MACD: 134.13</Indicator>
        </IndicatorTitle>
        <SubPanel $height={296}>
          <svg width="100%" height="294">
            {[23, 73, 123, 172].map((y) => (
              <line key={y} x1="2" x2="100%" y1={y} y2={y} stroke="#a80000" strokeDasharray="2 4" />
            ))}
            <line x1="4" x2="100%" y1="223" y2="223" stroke="#f0a000" strokeWidth="2" strokeDasharray="2 1" />
          </svg>
        </SubPanel>
        <IndicatorTitle>
          <ChevronIcon />
        </IndicatorTitle>
        <SubPanel $height={374}>
          <DottedLines height={361} lines={[16, 59, 103, 148, 192, 235, 280, 324]} />
          <svg width="24" height="10">
            <rect x="1" y="5" width="11" height="3" fill={RED} />
            <rect x="13" y="6" width="11" height="2" fill="#40c0c0" />
          </svg>
        </SubPanel>
        <StripRow $height={25} $pad={6} $color={RED}>19</StripRow>
        <StripRow $height={26} $pad={9}>指</StripRow>
        <StripRow $height={27} $pad={6}>扩</StripRow>
      </ChartColumn>

      <QuotePanel>
        <QuoteHead>
          <Flag>G</Flag>
          <svg width="12" height="14" strokeWidth="2">
            <path d="M1 1h10" stroke={RED} />
            <path d="M1 7h10" stroke="#c0c0c0" />
            <path d="M1 13h10" stroke={GREEN} />
          </svg>
          <Code>999999</Code>
          <IndexName>上证指数</IndexName>
        </QuoteHead>
        <FlowBox>
          <FlowRow>
            <FlowBar $width={49} $color={GREEN} />
            <FlowBar $width={134} $color={GREEN} />
            <FlowValue>135.0亿</FlowValue>
          </FlowRow>
          <FlowRow>
            <FlowBar $width={79} $color={RED} />
            <FlowBar $width={138} $color={RED} />
            <FlowValue>157.0亿</FlowValue>
          </FlowRow>
        </FlowBox>
        <Quotes rows={TURNOVER} height={118} />
        <Quotes rows={QUOTES} height={344} />
      </QuotePanel>
      <News />
    </Workspace>

    <StatusBar>
      <svg width="22" height="20" viewBox="0 0 22 20" fill="none">
        <rect width="22" height="20" rx="2" fill="#f0a418" />
        <path d="M8 4h10v7H8zM4 8h10v7H4z" fill="#f8c040" stroke="#fff" strokeWidth="2" />
      </svg>
      <svg width="60" height="46" viewBox="0 0 60 46">
        <rect x="1" y="1" width="58" height="44" rx="8" fill="#fff" stroke="#d8d8d8" />
        <path d="M14 22c8-5 16-6 24-4l2 4c-4 4-8 3-12 2l-10 3z" fill="#f06820" />
        <path d="M28 28l6-4 2 4z" fill="#402818" />
        <path d="M46 11l2 4 4 2-4 2-2 4-2-4-4-2 4-2z" fill="#ffc820" />
      </svg>
    </StatusBar>

    <Note>
      <p>
        {NOTE.map((line) => (
          <React.Fragment key={line}>
            {line}
            <br />
          </React.Fragment>
        ))}
      </p>
    </Note>
  </Window>
);

export default App;
